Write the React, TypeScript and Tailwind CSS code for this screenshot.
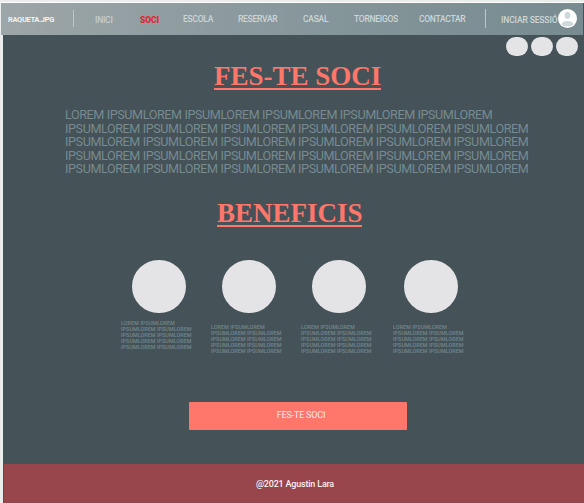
const links = ["ESCOLA", "RESERVAR", "CASAL", "TORNEIGOS", "CONTACTAR"];

const benefits = [
  { id: 1, text: "pt-[7px]" },
  { id: 2, text: "pt-[11px]" },
  { id: 3, text: "pt-[11px]" },
  { id: 4, text: "pt-[11px]" },
];

function Navbar() {
  return (
    <nav className="ml-px grid h-8 w-[582px] shrink-0 grid-cols-[72px_22px_45px_43px_55px_65px_51px_65px_66px_16px_57px_24px] items-start whitespace-nowrap bg-linear-to-r from-[#9da6a8] via-[#87979b] to-[#778b90] text-[8.5px] font-medium leading-[11px] text-[#ccd6d9]">
      <span className="pl-[7px] pt-[11px] text-[7.5px] font-bold tracking-[-0.35px] text-[#f0f2f3]">RAQUETA.JPG</span>
      <span className="mt-[7px] h-[17px] w-px bg-[#bcc8cb]" />
      <span className="pt-[12px] tracking-[-0.25px] text-[#c6cecf]">INICI</span>
      <span className="pt-[12px] font-black tracking-[-0.05px] text-[#e02633]">SOCI</span>
      {links.map((l) => (
        <span key={l} className="pt-[11px] tracking-[-0.27px]">{l}</span>
      ))}
      <span className="mt-[6px] h-[19px] w-px bg-[#bcc8cb]" />
      <span className="pt-[12px] tracking-[-0.13px]">INCIAR SESSIÓ</span>
      <svg className="mt-[6px]" width="19" height="19" viewBox="0 0 19 19">
        <circle cx="9.5" cy="9.5" r="9.5" fill="#fff" />
        <ellipse cx="9.5" cy="6.300" rx="2.9" ry="3.600" fill="#cfd9dc" />
        <path d="M3.5 15.500C4 13 6 12 9.500 12s5.500 1 6 3.500C14 17 12 17.300 9.500 17.300S5 17 3.500 15.500Z" fill="#cfd9dc" />
      </svg>
    </nav>
  );
}

export default function App() {
  return (
    <div className="flex h-[503px] w-[584px] flex-col overflow-hidden bg-[#ececec] font-['Roboto',sans-serif]">
      <div className="h-[3px] shrink-0 border-b border-white" />
      <div className="flex h-8 shrink-0 bg-linear-to-r from-[#ececec] from-50% to-[#455257] to-50%">
        <Navbar />
      </div>
      <main className="ml-[3px] flex h-[429px] shrink-0 flex-col bg-[#455257]">
        <div className="flex h-[23px] justify-end gap-[3px] pr-[6px] pt-[2px]">
          <div className="h-[19px] w-[22px] rounded-full bg-[#e4e4e7]" />
          <div className="h-[19px] w-[22px] rounded-full bg-[#e4e4e7]" />
          <div className="h-[19px] w-[22px] rounded-full bg-[#e4e4e7]" />
        </div>
        <h1 className="ml-[211px] mt-[3px] h-[29px] w-[167px] whitespace-nowrap border-b-2 border-[#ff766a] font-['Liberation_Serif',serif] text-[27px] font-bold leading-[31px] text-[#ff766a]">FES-TE SOCI</h1>
        <p className="ml-[62px] mt-[18px] h-[68px] w-[480px] whitespace-nowrap text-[12.6px] leading-[13.6px] tracking-[-0.4px] text-[#768b92]">
          LOREM IPSUMLOREM IPSUMLOREM IPSUMLOREM IPSUMLOREM IPSUMLOREM<br />
          IPSUMLOREM IPSUMLOREM IPSUMLOREM IPSUMLOREM IPSUMLOREM IPSUMLOREM<br />
          IPSUMLOREM IPSUMLOREM IPSUMLOREM IPSUMLOREM IPSUMLOREM IPSUMLOREM<br />
          IPSUMLOREM IPSUMLOREM IPSUMLOREM IPSUMLOREM IPSUMLOREM IPSUMLOREM<br />
          IPSUMLOREM IPSUMLOREM IPSUMLOREM IPSUMLOREM IPSUMLOREM IPSUMLOREM
        </p>
        <h2 className="ml-[214px] mt-[22px] h-[29px] w-[145px] whitespace-nowrap border-b-2 border-[#ff766a] font-['Liberation_Serif',serif] text-[27px] font-bold leading-[31px] text-[#ff766a]">BENEFICIS</h2>
        <section className="ml-[118px] mt-[33px] grid h-[100px] grid-cols-[90px_90px_92px_90px]">
          {benefits.map((b) => (
            <div key={b.id}>
              <div className="ml-[11px] h-[53px] w-[54px] rounded-full bg-[#e4e4e7]" />
              <p className={`${b.text} whitespace-nowrap text-[5.4px] font-medium leading-[6.1px] tracking-[0.05px] text-[#71868d]`}>
                LOREM IPSUMLOREM<br />
                IPSUMLOREM IPSUMLOREM<br />
                IPSUMLOREM IPSUMLOREM<br />
                IPSUMLOREM IPSUMLOREM<br />
                IPSUMLOREM IPSUMLOREM
              </p>
            </div>
          ))}
        </section>
        <button className="ml-[186px] mt-[42px] h-[28px] w-[218px] rounded-[1px] bg-[#ff766a] pb-[2px] pl-[6px] text-[9px] leading-[11px] tracking-[-0.2px] text-[#ffe8f0]">FES-TE SOCI</button>
      </main>
      <footer className="ml-[3px] h-[39px] shrink-0 border-l border-[#455257] bg-[#98464b] pl-[252px] pt-[14px] text-[9px] font-medium leading-[12px] tracking-[-0.2px] text-[#f6eef0]">
        @2021 Agustin Lara
      </footer>
    </div>
  );
}
